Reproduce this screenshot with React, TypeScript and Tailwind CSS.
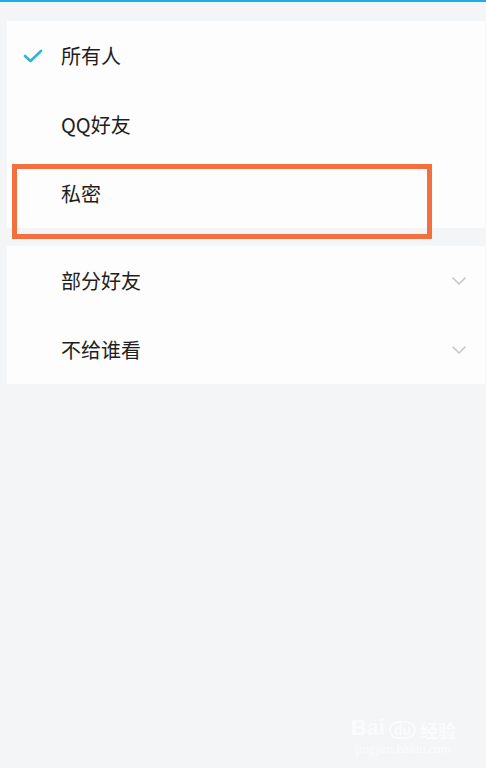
import React from 'react';

const Check = () => (
  <svg width="20" height="14" viewBox="0 0 20 14" fill="none">
    <path d="M2 7 L7.5 12 L18 2" stroke="#2cb6dc" strokeWidth="2.6" strokeLinecap="round" strokeLinejoin="round" />
  </svg>
);

const Chevron = () => (
  <svg width="16" height="10" viewBox="0 0 16 10" fill="none">
    <path d="M2 2 L8 8 L14 2" stroke="#c4c7cb" strokeWidth="1.6" strokeLinecap="round" strokeLinejoin="round" />
  </svg>
);

const Row: React.FC<{ label: string; checked?: boolean; expand?: boolean }> = ({ label, checked, expand }) => (
  <div className="h-[69px] flex items-center pl-[16px] pr-[18px]">
    <div className="w-[38px] flex items-center">{checked && <Check />}</div>
    <span className="flex-1 text-[20px] text-[#1e1e1e]">{label}</span>
    {expand && <Chevron />}
  </div>
);

export default function App() {
  return (
    <div
      className="relative w-[486px] h-[768px] bg-[#f4f5f6] overflow-hidden"
      style={{ fontFamily: '"Noto Sans CJK SC", "Noto Sans", sans-serif' }}
    >
      <div className="h-[2px] bg-[#1aaee6]" />
      <div className="h-[19px]" />
      <div className="ml-[7px] mr-[1px] bg-[#fdfdfd]">
        <Row label="所有人" checked />
        <Row label="QQ好友" />
        <Row label="私密" />
      </div>
      <div className="h-[18px]" />
      <div className="ml-[7px] mr-[1px] bg-[#fdfdfd]">
        <Row label="部分好友" expand />
        <Row label="不给谁看" expand />
      </div>

      {/* annotation box */}
      <div className="absolute left-[12px] top-[164px] w-[420px] h-[75px] border-[5px] border-[#f46f3e]" />

      {/* watermark */}
      <div className="absolute right-[30px] bottom-[14px] flex flex-col items-center text-white/70 select-none">
        <div className="flex items-end gap-1 text-[22px] font-bold leading-none" style={{ fontFamily: '"Liberation Sans", sans-serif' }}>
          <span>Bai</span>
          <span className="text-[14px] border-2 border-white/70 rounded-full px-[3px]">du</span>
          <span className="text-[18px]" style={{ fontFamily: '"Noto Sans CJK SC", sans-serif' }}>经验</span>
        </div>
        <span className="text-[11px] leading-none mt-1">jingyan.baidu.com</span>
      </div>
    </div>
  );
}
